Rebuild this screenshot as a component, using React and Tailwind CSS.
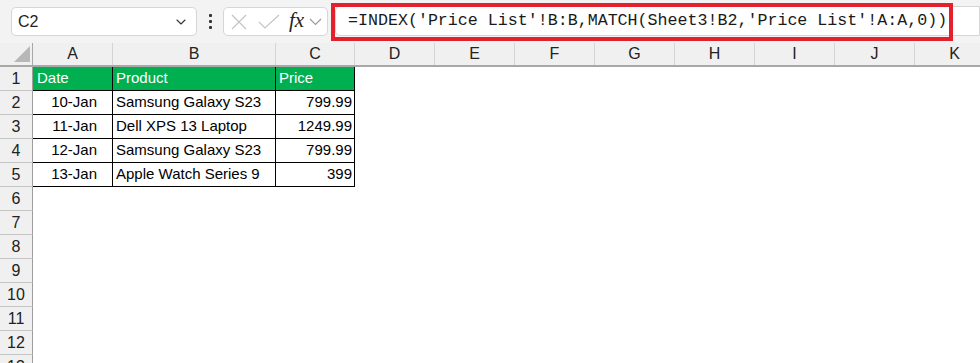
import { ChevronDown } from 'lucide-react';

const cols = ['A', 'B', 'C', 'D', 'E', 'F', 'G', 'H', 'I', 'J', 'K'];
const widths = ['w-[80px]', 'w-[163px]', 'w-[79px]', 'w-[80px]', 'w-[80px]', 'w-[80px]', 'w-[80px]', 'w-[80px]', 'w-[80px]', 'w-[80px]', 'w-[80px]'];

const data = [
  ['10-Jan', 'Samsung Galaxy S23', '799.99'],
  ['11-Jan', 'Dell XPS 13 Laptop', '1249.99'],
  ['12-Jan', 'Samsung Galaxy S23', '799.99'],
  ['13-Jan', 'Apple Watch Series 9', '399'],
];

const font = { fontFamily: '"Liberation Sans", Arial, sans-serif' };

function RowHeader({ n }) {
  return (
    <div className="w-[33px] shrink-0 h-full bg-[#f0f0f0] border-r border-[#9e9e9e] border-b border-b-[#c6c6c6] flex items-center justify-center text-[16px] text-[#222]">
      {n}
    </div>
  );
}

export default function App() {
  return (
    <div className="w-[980px] h-[363px] overflow-hidden bg-white" style={font}>
      {/* Formula bar */}
      <div className="h-[43px] bg-[#f3f3f3] flex items-center">
        <div className="ml-[11px] w-[186px] h-[29px] bg-white border border-[#d6d6d6] rounded-[5px] flex items-center justify-between pl-[6px] pr-[7px]">
          <span className="text-[16px] text-[#1f1f1f]">C2</span>
          <ChevronDown size={16} strokeWidth={1.6} className="text-[#333]" />
        </div>
        <div className="w-[26px] flex flex-col items-center gap-[3px]">
          <div className="w-[3px] h-[3px] bg-[#333] rounded-[1px]" />
          <div className="w-[3px] h-[3px] bg-[#333] rounded-[1px]" />
          <div className="w-[3px] h-[3px] bg-[#333] rounded-[1px]" />
        </div>
        <div className="w-[105px] h-[29px] bg-white border border-[#d6d6d6] rounded-[5px] flex items-center pl-[7px]">
          <svg width="16" height="16" viewBox="0 0 16 16" className="shrink-0">
            <path d="M1 1 L15 15 M15 1 L1 15" stroke="#c4c4c4" strokeWidth="1.2" fill="none" />
          </svg>
          <svg width="22" height="16" viewBox="0 0 22 16" className="shrink-0 ml-[11px]">
            <path d="M1 8 L7 14 L21 1" stroke="#c4c4c4" strokeWidth="1.2" fill="none" />
          </svg>
          <span className="ml-[9px] text-[21px] italic text-[#222] leading-none -mt-[2px]" style={{ fontFamily: '"Liberation Serif", "Times New Roman", serif' }}>fx</span>
          <svg width="13" height="8" viewBox="0 0 13 8" className="shrink-0 ml-[5px]">
            <path d="M1 1 L6.5 6.5 L12 1" stroke="#9a9a9a" strokeWidth="1.2" fill="none" />
          </svg>
        </div>
        <div className="relative ml-[3px] flex-1 h-[38px]">
          <div className="absolute left-[4px] right-0 top-[3px] h-[30px] bg-white border border-[#d6d6d6] rounded-l-[5px]" />
          <div className="absolute left-0 top-0 w-[622px] h-[38px] border-4 border-[#e4202c] flex items-center pl-[13px]">
            <span className="text-[16.65px] text-[#1a1a1a] whitespace-nowrap" style={{ fontFamily: '"Liberation Mono", "DejaVu Sans Mono", monospace' }}>
              =INDEX('Price List'!B:B,MATCH(Sheet3!B2,'Price List'!A:A,0))
            </span>
          </div>
        </div>
      </div>

      {/* Column headers */}
      <div className="flex h-[24px] bg-[#f0f0f0] border-b-2 border-[#a8a8a8]">
        <div className="w-[33px] shrink-0 h-full border-r border-[#a8a8a8] flex items-end justify-end pr-[2px] pb-[3px]">
          <div className="w-0 h-0 border-l-[16px] border-l-transparent border-b-[16px] border-b-[#b7b7b7]" />
        </div>
        {cols.map((c, i) => (
          <div key={c} className={`${widths[i]} shrink-0 h-full border-r border-[#d4d4d4] flex items-center justify-center text-[16px] text-[#222]`}>
            {c}
          </div>
        ))}
      </div>

      {/* Row 1 - headers */}
      <div className="flex h-[24px]">
        <RowHeader n={1} />
        <div className="w-[80px] shrink-0 bg-[#00b050] text-white text-[15px] flex items-center pl-[4px] border-r border-black border-b border-b-black">Date</div>
        <div className="w-[163px] shrink-0 bg-[#00b050] text-white text-[15px] flex items-center pl-[3px] border-r border-black border-b border-b-black">Product</div>
        <div className="w-[79px] shrink-0 bg-[#00b050] text-white text-[15px] flex items-center pl-[3px] border-r border-black border-b border-b-black">Price</div>
      </div>

      {data.map((r, i) => (
        <div key={i} className="flex h-[24px]">
          <RowHeader n={i + 2} />
          <div className="w-[80px] shrink-0 text-[15px] text-black flex items-center justify-end pr-[15px] border-r border-b border-black">{r[0]}</div>
          <div className="w-[163px] shrink-0 text-[15px] text-black flex items-center pl-[3px] border-r border-b border-black whitespace-nowrap">{r[1]}</div>
          <div className="w-[79px] shrink-0 text-[15px] text-black flex items-center justify-end pr-[2px] border-r border-b border-black">{r[2]}</div>
        </div>
      ))}

      {[6, 7, 8, 9, 10, 11, 12, 13].map(n => (
        <div key={n} className="flex h-[24px]">
          <RowHeader n={n} />
        </div>
      ))}
    </div>
  );
}
